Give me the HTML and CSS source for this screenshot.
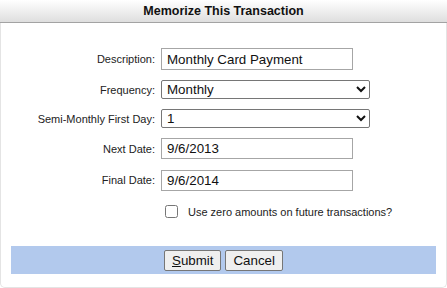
FILE: index.html
```html
<!DOCTYPE html>
<html lang="en">
<head>
    <meta charset="UTF-8">
    <meta name="viewport" content="width=device-width, initial-scale=1.0">
    <title>Memorize This Transaction</title>
    <link rel="stylesheet" href="styles.css">
</head>
<body>
    <div class="dialog">
        <div class="title">Memorize This Transaction</div>

        <form class="form">
            <label for="desc">Description:</label>
            <input id="desc" class="field" type="text" value="Monthly Card Payment">

            <label for="freq">Frequency:</label>
            <select id="freq" class="choice">
                <option>Monthly</option>
            </select>

            <label for="firstDay">Semi-Monthly First Day:</label>
            <select id="firstDay" class="choice">
                <option>1</option>
            </select>

            <label for="nextDate">Next Date:</label>
            <input id="nextDate" class="field date" type="text" value="9/6/2013">

            <label for="finalDate">Final Date:</label>
            <input id="finalDate" class="field date last" type="text" value="9/6/2014">

            <div class="check-row">
                <input id="zero" type="checkbox">
                <label for="zero">Use zero amounts on future transactions?</label>
            </div>
        </form>

        <div class="buttons">
            <button type="button"><u>S</u>ubmit</button>
            <button type="button">Cancel</button>
        </div>
    </div>
</body>
</html>
```

FILE: styles.css
```css
body {
    margin: 0;
    background-color: #ffffff;
    font-family: "Liberation Sans", Arial, sans-serif;
}

.dialog {
    width: 447px;
    height: 288px;
    box-sizing: border-box;
    border: 1px solid #e4e4e4;
    border-top: none;
    border-radius: 0 0 5px 5px;
    background-color: #ffffff;
}

.title {
    height: 22px;
    line-height: 22px;
    margin: 0 -1px;
    text-align: center;
    font-size: 12.5px;
    font-weight: bold;
    color: #111;
    background: linear-gradient(to bottom, #ffffff, #dedede);
    border-bottom: 1px solid #a3a3a3;
}

/* Formulario en dos columnas */
.form {
    display: grid;
    grid-template-columns: 154px auto;
    column-gap: 6px;
    row-gap: 10px;
    align-items: center;
    justify-items: start;
    padding-top: 25px;
    margin: 0;
}

.form > label {
    justify-self: end;
    font-size: 11px;
    color: #222;
}

.field {
    width: 192px;
    height: 22px;
    box-sizing: border-box;
    padding: 0 0 0 5px;
    border: 1px solid #a6a6a6;
    font-family: "Liberation Sans", Arial, sans-serif;
    font-size: 13.33px;
    color: #111;
}

.date {
    height: 21px;
}

.last {
    margin-top: 1px;
}

.choice {
    width: 209px;
    height: 19px;
    box-sizing: border-box;
    padding: 0 0 0 1px;
    border: 1px solid #767676;
    border-radius: 2px;
    background-color: #ffffff;
    font-family: "Liberation Sans", Arial, sans-serif;
    font-size: 13.33px;
    color: #111;
}

.check-row {
    grid-column: 2;
    display: flex;
    align-items: center;
    margin-top: 4px;
    font-size: 11px;
    color: #222;
}

.check-row input {
    width: 13px;
    height: 13px;
    margin: 0 10px 0 4px;
}

.buttons {
    display: flex;
    justify-content: center;
    gap: 4px;
    height: 28px;
    align-items: center;
    margin: 28px 10px 0;
    background-color: #b2c9ed;
}

button {
    height: 21px;
    padding: 0 7px;
    border: 1px solid #767676;
    border-radius: 2px;
    background-color: #efefef;
    font-family: "Liberation Sans", Arial, sans-serif;
    font-size: 13.33px;
    color: #111;
}
```
